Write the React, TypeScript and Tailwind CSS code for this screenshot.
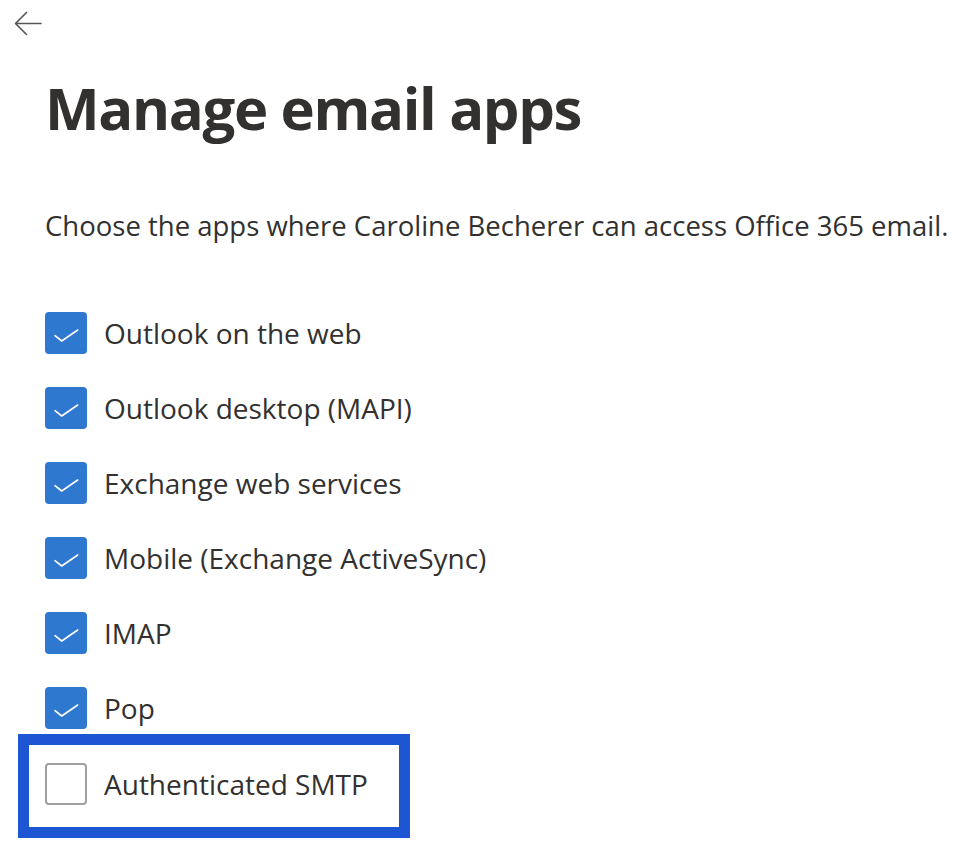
import { useState } from 'react'

const apps = [
  { label: 'Outlook on the web', checked: true },
  { label: 'Outlook desktop (MAPI)', checked: true },
  { label: 'Exchange web services', checked: true },
  { label: 'Mobile (Exchange ActiveSync)', checked: true },
  { label: 'IMAP', checked: true },
  { label: 'Pop', checked: true },
]

function CheckBox({ checked, onClick }: { checked: boolean; onClick: () => void }) {
  return (
    <button
      onClick={onClick}
      className={`w-[42px] h-[42px] rounded-[4px] flex items-center justify-center shrink-0 ${
        checked ? 'bg-[#2f78cf]' : 'bg-white border-2 border-[#a19f9d]'
      }`}
    >
      {checked && (
        <svg width="42" height="42" viewBox="0 0 42 42" fill="none">
          <path d="M10 23.7L16.7 29L32.7 18" stroke="white" strokeWidth="1.6" strokeLinecap="round" strokeLinejoin="round" />
        </svg>
      )}
    </button>
  )
}

export default function App() {
  const [state, setState] = useState([...apps.map((a) => a.checked), false])

  const toggle = (i: number) => setState((s) => s.map((v, j) => (j === i ? !v : v)))

  return (
    <div className="min-h-[862px] bg-white text-[#323130] font-['Open_Sans',sans-serif]">
      {/* Back button */}
      <div className="pt-[10px] pl-[14px] h-[60px]">
        <button className="w-[28px] h-[28px] flex items-center justify-center" aria-label="Back">
          <svg width="28" height="28" viewBox="0 0 28 28" fill="none">
            <path d="M27 13.5H2M12.5 2.5L1.5 13.5L12.5 24.5" stroke="#555" strokeWidth="1.6" strokeLinecap="round" strokeLinejoin="round" />
          </svg>
        </button>
      </div>

      <div className="pl-[45px]">
        <h1 className="text-[58px] leading-none font-bold tracking-[-1.35px] mt-[18.5px]">Manage email apps</h1>

        <p className="text-[27.5px] leading-none mt-[75px]">
          Choose the apps where Caroline Becherer can access Office 365 email.
        </p>

        <div className="flex flex-col mt-[56.5px]">
          {apps.map((a, i) => (
            <div key={a.label} className="flex items-center h-[75px] gap-[17px]">
              <CheckBox checked={state[i]} onClick={() => toggle(i)} />
              <span className="text-[28px] leading-none">{a.label}</span>
            </div>
          ))}

          <div className="-ml-[27px] -mt-[11.5px] w-[392px] h-[104px] border-[11px] border-[#1d55d2] flex items-center pl-[16px] pb-[4px] gap-[17px]">
            <CheckBox checked={state[6]} onClick={() => toggle(6)} />
            <span className="text-[28px] leading-none">Authenticated SMTP</span>
          </div>
        </div>
      </div>
    </div>
  )
}
